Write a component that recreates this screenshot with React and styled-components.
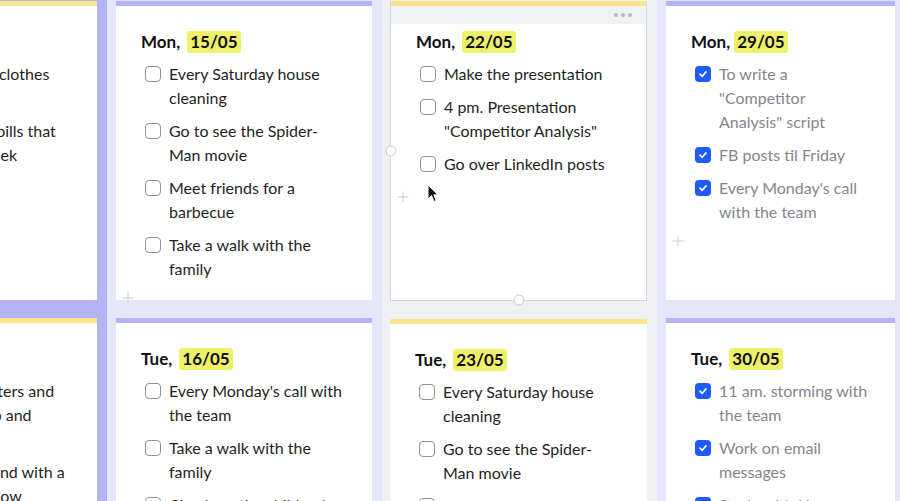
import styled, { createGlobalStyle } from 'styled-components';

const GlobalStyle = createGlobalStyle`
  html, body {
    margin: 0;
    padding: 0;
    height: 100%;
    overflow: hidden;
    background: #e6e6fb;
    font-family: Lato, "Liberation Sans", sans-serif;
  }
`;

const Board = styled.div`
  display: flex;
  align-items: flex-start;
  height: 501px;
  margin-left: -168px;
`;

const Column = styled.div`
  display: flex;
  flex-direction: column;
  gap: 18px;
  flex: 0 0 ${({ $width }) => $width}px;
  height: 100%;
  padding: 1px 0 0 ${({ $padLeft }) => $padLeft}px;
  box-sizing: border-box;
  background: ${({ $bg }) => $bg};
`;

const Card = styled.div`
  position: relative;
  display: flex;
  flex-direction: column;
  flex-shrink: 0;
  width: ${({ $width }) => $width}px;
  height: ${({ $height }) => ($height ? `${$height}px` : 'auto')};
  box-sizing: border-box;
  background: #fff;
  border: ${({ $selected }) => ($selected ? '1px solid #d3d6db' : 'none')};
  border-top: none;
`;

const Bar = styled.div`
  height: 5px;
  flex-shrink: 0;
  background: ${({ $color }) => $color};
`;

const Chrome = styled.div`
  height: 18px;
  display: flex;
  align-items: center;
  justify-content: flex-end;
  gap: 3px;
  padding-right: 14px;
  background: #f0f1f3;
`;

const Dot = styled.span`
  width: 4px;
  height: 4px;
  border-radius: 50%;
  background: #b7bac0;
`;

const Body = styled.div`
  display: flex;
  flex-direction: column;
  padding: ${({ $top }) => $top}px 20px 0 25px;
`;

const Title = styled.div`
  display: flex;
  align-items: center;
  gap: ${({ $gap }) => $gap}px;
  font-size: 17px;
  line-height: 22px;
  font-weight: 700;
  color: #111114;
  margin-bottom: 9px;
`;

const DateMark = styled.span`
  background: #eef06c;
  border-radius: 3px;
  padding: 0 3px;
`;

const List = styled.div`
  display: flex;
  flex-direction: column;
  gap: 9px;
`;

const Item = styled.div`
  display: flex;
  gap: 8px;
  padding-left: 4px;
`;

const Box = styled.span`
  flex: 0 0 16px;
  height: 16px;
  margin-top: 4px;
  box-sizing: border-box;
  border-radius: 4px;
  border: ${({ $checked }) => ($checked ? 'none' : '1.5px solid #8e929b')};
  background: ${({ $checked }) => ($checked ? '#1d5cfb' : '#fff')};
  display: flex;
  align-items: center;
  justify-content: center;
`;

const Text = styled.span`
  max-width: ${({ $max }) => $max}px;
  font-size: 16px;
  line-height: 24px;
  color: ${({ $checked }) => ($checked ? '#83868f' : '#1e1f24')};
`;

const Add = styled.div`
  width: 12px;
  height: 12px;
  margin: ${({ $top }) => $top}px 0 0 -19px;
  color: #c9cbd0;
  display: flex;
`;

const Handle = styled.span`
  position: absolute;
  width: 9px;
  height: 9px;
  border-radius: 50%;
  background: #fff;
  border: 1px solid #c4c7cd;
  left: ${({ $left }) => $left};
  top: ${({ $top }) => $top};
  transform: translate(-50%, -50%);
`;

const Cursor = styled.svg`
  position: absolute;
  left: 427px;
  top: 184px;
  pointer-events: none;
`;

const Check = () => (
  <svg width="10" height="10" viewBox="0 0 10 10">
    <path d="M2 5.2 L4.2 7.3 L8 2.9" fill="none" stroke="#fff" strokeWidth="1.7" strokeLinecap="round" strokeLinejoin="round" />
  </svg>
);

const Plus = () => (
  <svg width="12" height="12" viewBox="0 0 12 12">
    <path d="M6 0.5 V11.5 M0.5 6 H11.5" stroke="currentColor" strokeWidth="1" />
  </svg>
);

const DayCard = ({ day, date, gap = 7, items, checked, max, width = 256, height, bar, selected, add, addTop = 11, children }) => (
  <Card $width={width} $height={height} $selected={selected}>
    <Bar $color={bar} />
    {selected && (
      <Chrome>
        <Dot />
        <Dot />
        <Dot />
      </Chrome>
    )}
    <Body $top={selected ? 7 : 25}>
      <Title $gap={gap}>
        {day},<DateMark>{date}</DateMark>
      </Title>
      <List>
        {items.map((t) => (
          <Item key={t}>
            <Box $checked={checked}>{checked && <Check />}</Box>
            <Text $checked={checked} $max={max}>{t}</Text>
          </Item>
        ))}
      </List>
      {add && (
        <Add $top={addTop}>
          <Plus />
        </Add>
      )}
    </Body>
    {children}
  </Card>
);

const PURPLE = '#b3b3f6';
const LAVENDER = '#e6e6fb';
const GRAY = '#eff0f3';
const YELLOW = '#fbe58b';

export default function App() {
  return (
    <>
      <GlobalStyle />
      <Board>
        <Column $width={275} $padLeft={9} $bg={PURPLE}>
          <DayCard
            day="Sun"
            date="14/05"
            bar={YELLOW}
            height={299}
            max={178}
            items={['Wash and iron clothes for kids', 'Pay all of your bills that are due this week', 'Buy groceries']}
          />
          <DayCard
            day="Mon"
            date="15/05"
            bar={YELLOW}
            max={178}
            items={['Wipe the counters and vacuum, sweep and scrub floors', 'Relax and unwind with a good Netflix show']}
          />
        </Column>

        <Column $width={275} $padLeft={9} $bg={LAVENDER}>
          <DayCard
            day="Mon"
            date="15/05"
            bar={PURPLE}
            height={299}
            max={178}
            add
            items={['Every Saturday house cleaning', 'Go to see the Spider-Man movie', 'Meet friends for a barbecue', 'Take a walk with the family']}
          />
          <DayCard
            day="Tue"
            date="16/05"
            bar={PURPLE}
            max={178}
            items={["Every Monday's call with the team", 'Take a walk with the family', "Check on the children's homework"]}
          />
        </Column>

        <Column $width={275} $padLeft={8} $bg={GRAY}>
          <DayCard
            day="Mon"
            date="22/05"
            bar={YELLOW}
            width={257}
            height={300}
            max={178}
            selected
            add
            addTop={15}
            items={['Make the presentation', '4 pm. Presentation "Competitor Analysis"', 'Go over LinkedIn posts']}
          >
            <Handle $left="0px" $top="150px" />
            <Handle $left="50%" $top="100%" />
          </DayCard>
          <DayCard
            day="Tue"
            date="23/05"
            bar={YELLOW}
            width={257}
            max={178}
            items={['Every Saturday house cleaning', 'Go to see the Spider-Man movie', 'Meet friends for a barbecue']}
          />
        </Column>

        <Column $width={250} $padLeft={9} $bg={LAVENDER}>
          <DayCard
            day="Mon"
            date="29/05"
            gap={4}
            bar={PURPLE}
            width={229}
            height={299}
            max={150}
            checked
            add
            items={['To write a "Competitor Analysis" script', 'FB posts til Friday', "Every Monday's call with the team"]}
          />
          <DayCard
            day="Tue"
            date="30/05"
            bar={PURPLE}
            width={229}
            max={150}
            checked
            items={['11 am. storming with the team', 'Work on email messages', 'Study with Liz']}
          />
        </Column>
      </Board>
      <Cursor width="12" height="19" viewBox="0 0 12 19">
        <path d="M1 1 L1 15 L4.5 11.6 L7 17.5 L9.2 16.5 L6.8 10.8 L11 10.8 Z" fill="#111" stroke="#fff" strokeWidth="1" strokeLinejoin="round" />
      </Cursor>
    </>
  );
}
